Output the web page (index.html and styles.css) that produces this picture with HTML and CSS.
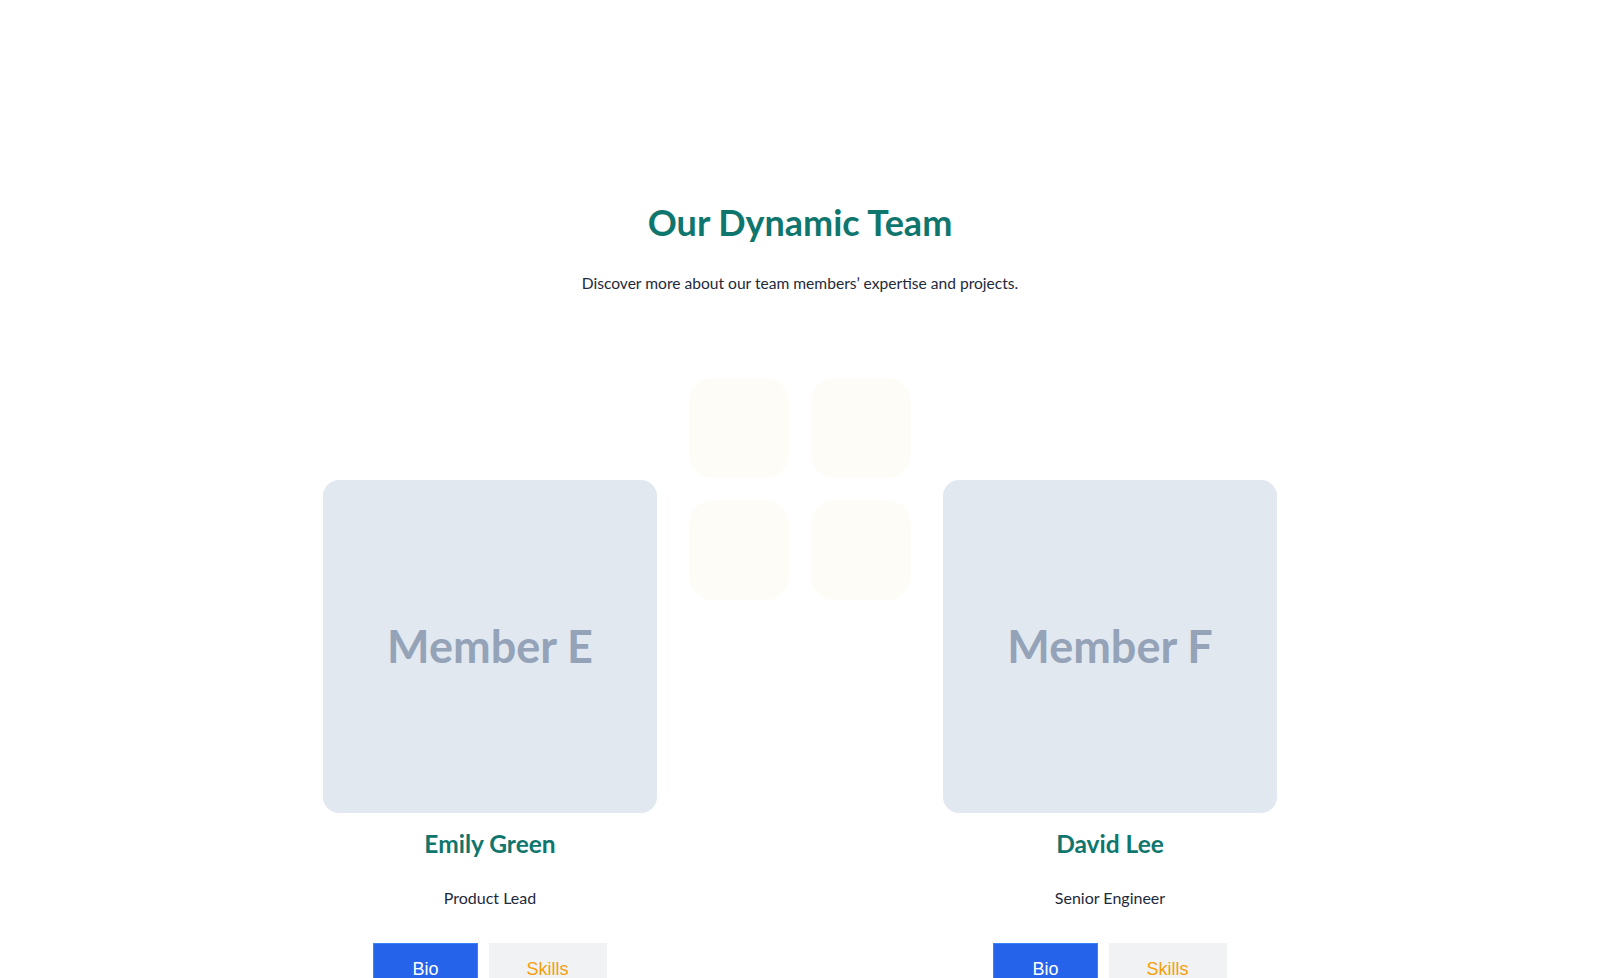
FILE: index.html
```html
<!DOCTYPE html>
<html>
<head>
    <meta charset="utf-8">
    <title>Our Dynamic Team</title>
    <link rel="stylesheet" href="styles.css">
</head>
<body>
    <section class="team">
        <h1 class="team-title">Our Dynamic Team</h1>
        <p class="team-lead">Discover more about our team members’ expertise and projects.</p>

        <div class="team-row">
            <article class="member">
                <div class="member-photo">Member E</div>
                <h3 class="member-name">Emily Green</h3>
                <p class="member-role">Product Lead</p>
                <div class="member-actions">
                    <button class="btn btn-bio">Bio</button>
                    <button class="btn btn-skills">Skills</button>
                </div>
            </article>

            <!-- decorative tile block between the cards -->
            <div class="tiles">
                <span class="tile"></span>
                <span class="tile"></span>
                <span class="tile"></span>
                <span class="tile"></span>
            </div>

            <article class="member">
                <div class="member-photo">Member F</div>
                <h3 class="member-name">David Lee</h3>
                <p class="member-role">Senior Engineer</p>
                <div class="member-actions">
                    <button class="btn btn-bio">Bio</button>
                    <button class="btn btn-skills">Skills</button>
                </div>
            </article>
        </div>
    </section>
</body>
</html>
```

FILE: styles.css
```css
body {
    margin: 0;
    background: #ffffff;
    font-family: Lato, "Open Sans", sans-serif;
    color: #1e293b;
}
.team {
    padding-top: 201px;
    text-align: center;
}
.team-title {
    margin: 0;
    font-size: 36px;
    line-height: 1.2;
    font-weight: 700;
    color: #0f766e;
}
.team-lead {
    margin: 28px 0 0;
    font-size: 15.6px;
    line-height: 1.5;
}
.team-row {
    display: flex;
    justify-content: center;
    align-items: flex-start;
    gap: 32px;
    margin-top: 82px;
}
.member {
    width: 334px;
    margin-top: 102px;
}
.member-photo {
    height: 333px;
    display: flex;
    align-items: center;
    justify-content: center;
    background: #e2e8f0;
    border-radius: 16px;
    font-size: 45px;
    font-weight: 700;
    color: #94a3b8;
}
.member-name {
    margin: 13px 0 0;
    font-size: 24.5px;
    line-height: 1.5;
    font-weight: 700;
    color: #0f766e;
}
.member-role {
    margin: 25px 0 0;
    font-size: 16px;
    line-height: 1.4;
}
.member-actions {
    display: flex;
    justify-content: center;
    gap: 11px;
    margin-top: 33px;
}
.btn {
    font-family: "Liberation Sans", Arial, sans-serif;
    font-size: 18px;
    padding: 15px 38px;
    border: 1px solid transparent;
    cursor: pointer;
}
.btn-bio {
    background: #2563eb;
    border-color: #3b82f6;
    color: #ffffff;
}
.btn-skills {
    padding: 15px 37px;
    background: #f1f2f4;
    border-color: #f1f2f4;
    color: #f59e0b;
}
.tiles {
    display: grid;
    grid-template-columns: 100px 100px;
    gap: 22px;
}
.tile {
    height: 100px;
    background: #fdfcf6;
    border-radius: 24px;
}
```
